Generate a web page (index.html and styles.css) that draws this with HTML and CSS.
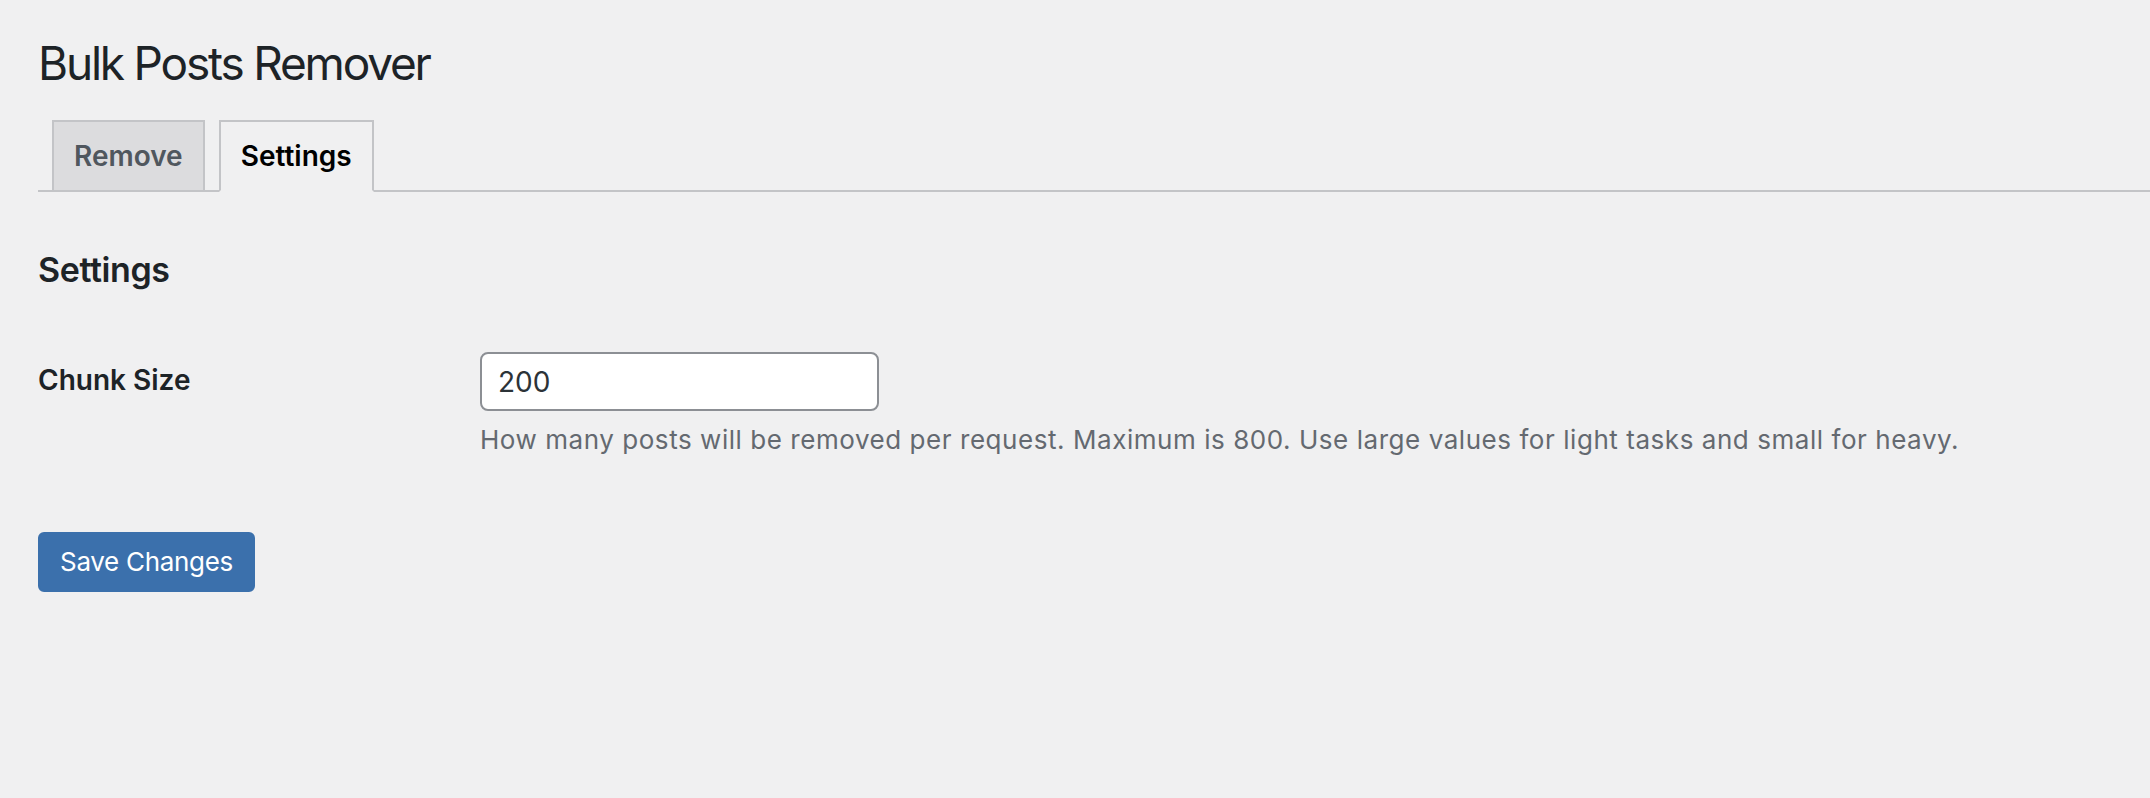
FILE: index.html
```html
<!DOCTYPE html>
<html lang="en">
<head>
<meta charset="utf-8">
<title>Bulk Posts Remover</title>
<link rel="stylesheet" href="styles.css">
</head>
<body>
<div class="wrap">
  <h1 class="page-title">Bulk Posts Remover</h1>
  <nav class="tabs">
    <a class="tab" href="#">Remove</a>
    <a class="tab tab-active" href="#">Settings</a>
  </nav>
  <h2 class="section-title">Settings</h2>
  <form class="settings-form">
    <div class="form-row">
      <label class="field-label" for="chunk">Chunk Size</label>
      <div class="field">
        <input class="text-input" id="chunk" type="text" value="200">
        <p class="description">How many posts will be removed per request. Maximum is 800. Use large values for light tasks and small for heavy.</p>
      </div>
    </div>
    <div class="submit-row">
      <button class="button-primary" type="button">Save Changes</button>
    </div>
  </form>
</div>
</body>
</html>
```
FILE: styles.css
```css
html, body {
  margin: 0;
  padding: 0;
  background: #f0f0f1;
}
body {
  font-family: Inter, "Noto Sans", "Liberation Sans", sans-serif;
  color: #1d2327;
  height: 798px;
  overflow: hidden;
}
.wrap {
  padding: 33px 0 0 38px;
}
.page-title {
  margin: 0;
  font-size: 46px;
  line-height: 60px;
  font-weight: 400;
  letter-spacing: -2.2px;
  color: #1d2327;
}
.tabs {
  display: flex;
  margin-top: 27px;
  border-bottom: 2px solid #c3c4c7;
  padding-left: 0;
}
.tab {
  display: block;
  margin-left: 14px;
  margin-bottom: -2px;
  padding: 10px 20px;
  font-size: 28px;
  line-height: 48px;
  font-weight: 600;
  color: #50575e;
  background: #dcdcde;
  border: 2px solid #c3c4c7;
  border-bottom: 2px solid #c3c4c7;
  text-decoration: none;
}
.tab-active {
  color: #000;
  background: #f0f0f1;
  border-bottom-color: #f0f0f1;
}
.section-title {
  margin: 56px 0 0;
  font-size: 34px;
  line-height: 44px;
  font-weight: 600;
  letter-spacing: -0.4px;
  color: #1d2327;
}
.settings-form {
  margin: 0;
}
.form-row {
  display: grid;
  grid-template-columns: 442px 1fr;
  align-items: start;
  margin-top: 60px;
}
.field-label {
  padding-top: 10px;
  font-size: 28px;
  line-height: 36px;
  font-weight: 600;
  color: #1d2327;
}
.field {
  display: flex;
  flex-direction: column;
  align-items: flex-start;
}
.text-input {
  box-sizing: border-box;
  width: 399px;
  height: 59px;
  margin: 0;
  padding: 0 16px;
  border: 2px solid #8c8f94;
  border-radius: 8px;
  background: #fff;
  font-family: inherit;
  font-size: 28px;
  color: #2c3338;
  outline: none;
}
.description {
  margin: 11px 0 0;
  font-size: 26px;
  line-height: 36px;
  letter-spacing: 0.55px;
  color: #646970;
}
.submit-row {
  margin-top: 74px;
}
.button-primary {
  box-sizing: border-box;
  height: 60px;
  padding: 0 20px;
  border: 2px solid #3b70ac;
  border-radius: 6px;
  background: #3b70ac;
  color: #fff;
  font-family: inherit;
  font-size: 26px;
  line-height: 56px;
  letter-spacing: -0.3px;
  cursor: pointer;
}
```
